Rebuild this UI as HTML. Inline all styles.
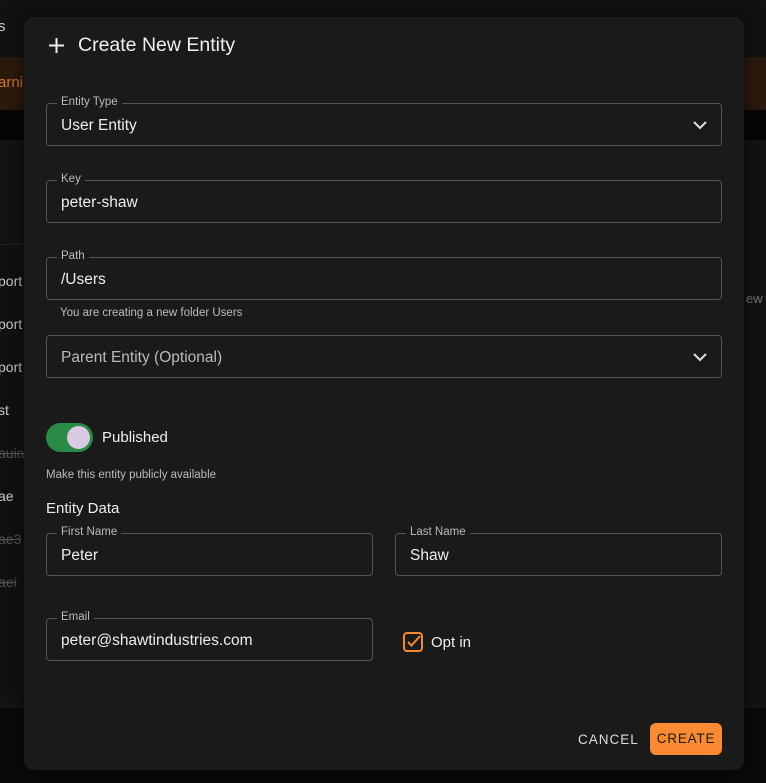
<!DOCTYPE html>
<html><head><style>
*{box-sizing:border-box;margin:0;padding:0}
body{width:766px;height:783px;background:#0a0a0a;font-family:"Liberation Sans",sans-serif;position:relative;overflow:hidden;color:#eee}
.abs{position:absolute;white-space:nowrap}
.f{position:absolute;left:46px;width:676px;height:43px;border:1px solid #555;border-radius:4px}
.f .l{position:absolute;top:-8px;left:10px;padding:0 4px;background:#1a1a1a;font-size:11.5px;color:#bbb}
.f .v{position:absolute;left:14px;top:13px;font-size:15.5px;color:#eee}
.chev{position:absolute;right:14px;top:14px}
</style></head><body>
<div class="abs" style="left:0;top:0;width:766px;height:57px;background:#121212"></div>
<div class="abs" style="left:0;top:57px;width:766px;height:53px;background:#2b1a0e"></div>
<div class="abs" style="left:0;top:110px;width:766px;height:30px;background:#050505"></div>
<div class="abs" style="left:0;top:140px;width:766px;height:568px;background:#141414"></div>
<div class="abs" style="left:0;top:244px;width:24px;height:450px;background:#111;border-top:1px solid #222"></div>
<div class="abs" style="left:-2px;top:18px;font-size:15px;color:#ccc">s</div>
<div class="abs" style="left:-2px;top:74px;font-size:15px;color:#d9742a">arni</div>
<div class="abs" style="left:-2px;top:273px;font-size:14px;color:#ccc">port</div>
<div class="abs" style="left:-2px;top:316px;font-size:14px;color:#ccc">port</div>
<div class="abs" style="left:-2px;top:359px;font-size:14px;color:#ccc">port</div>
<div class="abs" style="left:-2px;top:402px;font-size:14px;color:#ccc">st</div>
<div class="abs" style="left:-2px;top:445px;font-size:14px;color:#555;text-decoration:line-through">auia</div>
<div class="abs" style="left:-2px;top:488px;font-size:14px;color:#ccc">ae</div>
<div class="abs" style="left:-2px;top:531px;font-size:14px;color:#555;text-decoration:line-through">ae3</div>
<div class="abs" style="left:-2px;top:574px;font-size:14px;color:#555;text-decoration:line-through">aei</div>
<div class="abs" style="left:746px;top:291px;font-size:13px;color:#777">ew c</div>

<div class="abs" style="left:24px;top:17px;width:720px;height:753px;background:#1a1a1a;border-radius:10px;box-shadow:0 0 20px rgba(0,0,0,.6)">
<div style="position:relative;left:-24px;top:-17px">
<svg class="abs" style="left:48px;top:37px" width="17" height="17" viewBox="0 0 17 17"><path d="M8.5 1V16M1 8.5H16" stroke="#eee" stroke-width="2"/></svg>
<div class="abs" style="left:78px;top:34px;font-size:19.5px;color:#f0f0f0">Create New Entity</div>

<div class="f" style="top:103px"><span class="l">Entity Type</span><span class="v">User Entity</span>
<svg class="chev" width="14" height="14" viewBox="0 0 14 14"><path d="M1 4L7 10L13 4" stroke="#ddd" stroke-width="2" fill="none"/></svg></div>
<div class="f" style="top:180px"><span class="l">Key</span><span class="v">peter-shaw</span></div>
<div class="f" style="top:257px"><span class="l">Path</span><span class="v">/Users</span></div>
<div class="abs" style="left:60px;top:307px;font-size:11.5px;color:#bbb">You are creating a new folder Users</div>
<div class="f" style="top:335px"><span class="v" style="color:#bbb">Parent Entity (Optional)</span>
<svg class="chev" width="14" height="14" viewBox="0 0 14 14"><path d="M1 4L7 10L13 4" stroke="#ddd" stroke-width="2" fill="none"/></svg></div>

<div class="abs" style="left:46px;top:423px;width:47px;height:29px;border-radius:15px;background:#2a8a48"></div>
<div class="abs" style="left:67px;top:426px;width:23px;height:23px;border-radius:50%;background:#d9c9e3"></div>
<div class="abs" style="left:102px;top:429px;font-size:15px;color:#eee">Published</div>
<div class="abs" style="left:46px;top:469px;font-size:11.5px;color:#bbb">Make this entity publicly available</div>
<div class="abs" style="left:46px;top:500px;font-size:15px;color:#eee">Entity Data</div>

<div class="f" style="top:533px;width:327px"><span class="l">First Name</span><span class="v">Peter</span></div>
<div class="f" style="top:533px;left:395px;width:327px"><span class="l">Last Name</span><span class="v">Shaw</span></div>
<div class="f" style="top:618px;width:327px"><span class="l">Email</span><span class="v">peter@shawtindustries.com</span></div>

<svg class="abs" style="left:403px;top:632px" width="20" height="20" viewBox="0 0 20 20"><rect x="1" y="1" width="18" height="18" rx="3" stroke="#f5892f" stroke-width="2" fill="none"/><path d="M5 10L8.5 13.5L17 4" stroke="#f5892f" stroke-width="2" fill="none"/></svg>
<div class="abs" style="left:431px;top:634px;font-size:15px;color:#eee">Opt in</div>

<div class="abs" style="left:578px;top:732px;font-size:13.5px;letter-spacing:1px;color:#ddd">CANCEL</div>
<div class="abs" style="left:650px;top:723px;width:72px;height:32px;border-radius:6px;background:#fb8a32;color:#1a1a1a;font-size:13.5px;letter-spacing:0.8px;text-align:center;line-height:32px">CREATE</div>
</div></div>
</body></html>
